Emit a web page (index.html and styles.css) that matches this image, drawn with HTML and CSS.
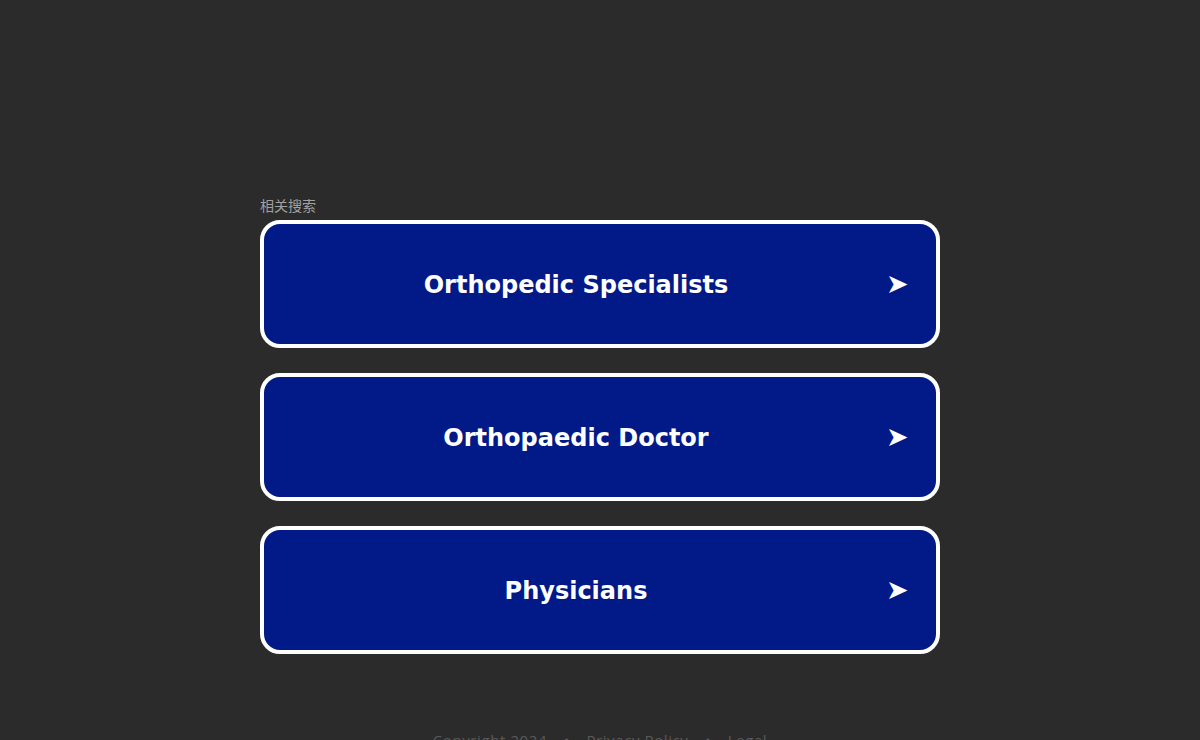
FILE: index.html
```html
<!DOCTYPE html>
<html lang="zh">
<head>
    <meta charset="UTF-8">
    <meta name="viewport" content="width=device-width, initial-scale=1.0">
    <title>相关搜索</title>
    <link rel="stylesheet" href="styles.css">
</head>
<body>
    <div class="wrapper">
        <div class="label">相关搜索</div>
        <div class="links">
            <a class="link" href="#"><span class="text">Orthopedic Specialists</span><span class="arrow">➤</span></a>
            <a class="link" href="#"><span class="text">Orthopaedic Doctor</span><span class="arrow">➤</span></a>
            <a class="link" href="#"><span class="text">Physicians</span><span class="arrow">➤</span></a>
        </div>
        <div class="footer">
            <span>Copyright 2024</span>
            <span class="dot">•</span>
            <span>Privacy Policy</span>
            <span class="dot">•</span>
            <span>Legal</span>
        </div>
    </div>
</body>
</html>
```

FILE: styles.css
```css
* {
    box-sizing: border-box;
}

body {
    margin: 0;
    background-color: #2b2b2b;
    font-family: 'DejaVu Sans', sans-serif;
    overflow: hidden;
    height: 740px;
}

.wrapper {
    width: 680px;
    margin: 0 auto;
    padding-top: 196px;
}

.label {
    font-family: 'Noto Sans CJK SC', sans-serif;
    font-size: 14px;
    line-height: 19px;
    color: #a0a0a0;
    margin-bottom: 5px;
}

.links {
    display: flex;
    flex-direction: column;
    gap: 25px;
}

.link {
    display: flex;
    align-items: center;
    height: 128px;
    background-color: #011a87;
    border: 4px solid #ffffff;
    border-radius: 20px;
    color: #ffffff;
    text-decoration: none;
}

.text {
    flex: 1;
    text-align: center;
    font-weight: bold;
    font-size: 24px;
    padding-top: 2px;
}

.arrow {
    width: 50px;
    margin-left: -2px;
    font-size: 27px;
    line-height: 1;
    padding-bottom: 2px;
}

.footer {
    margin-top: 76px;
    text-align: center;
    font-family: 'Open Sans', sans-serif;
    font-size: 15px;
    letter-spacing: 0.6px;
    color: #5a5a5a;
}

.dot {
    margin: 0 12px;
}
```
